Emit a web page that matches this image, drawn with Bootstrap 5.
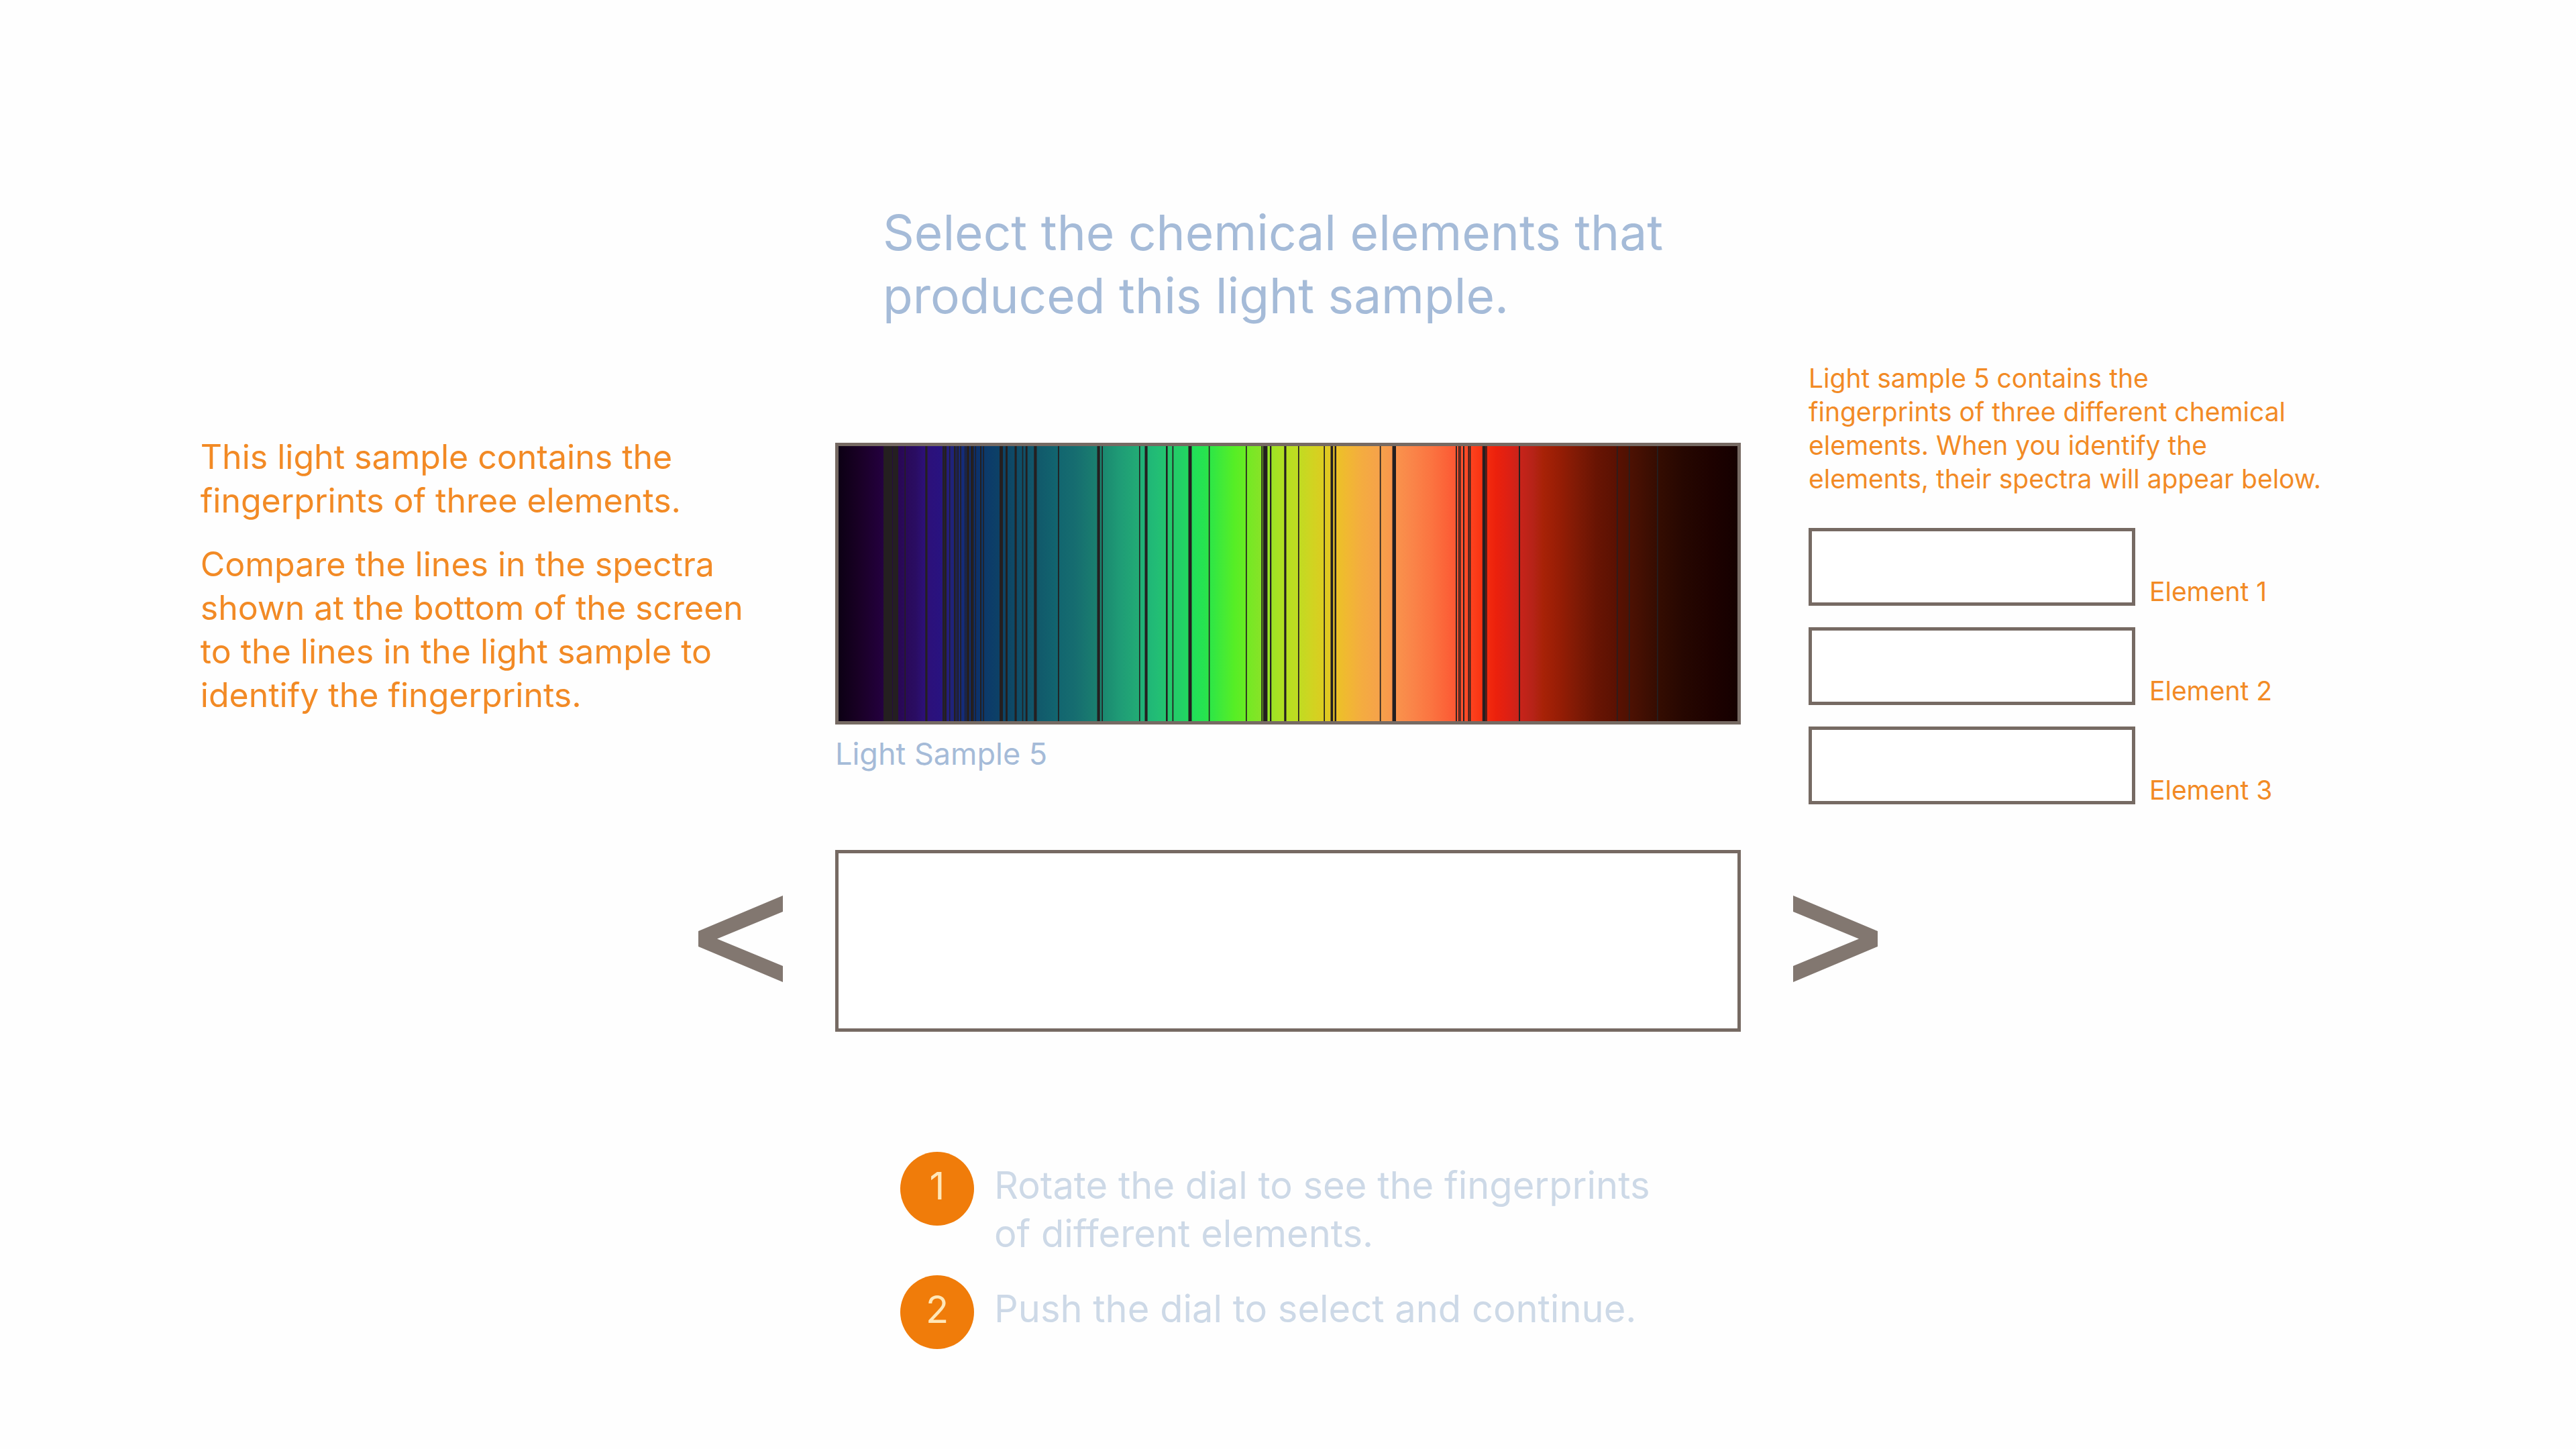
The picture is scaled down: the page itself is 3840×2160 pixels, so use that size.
<!DOCTYPE html>
<html lang="en">
<head>
<meta charset="utf-8">
<meta name="viewport" content="width=device-width, initial-scale=1">
<title>Light Sample 5</title>
<link href="https://cdn.jsdelivr.net/npm/bootstrap@5.3.0/dist/css/bootstrap.min.css" rel="stylesheet">
<style>
  body { background: #fefefe; font-family: Inter, "Liberation Sans", sans-serif; padding-top: 300px; }
  .center-col { flex: 0 1 1350px; min-width: 0; }
  .side-col { flex: 1 1 0; min-width: 0; }
  .blue { color: #a5bbd8; }
  .orange { color: #f28a25; }
  .heading { font-size: 73px; line-height: 94px; font-weight: 400; padding-left: 71px; margin-bottom: 51px; }
  .intro { font-size: 50px; line-height: 65px; padding-left: 24%; padding-top: 110px; }
  .intro p { margin-bottom: 30px; }
  .sample { padding-top: 121px; }
  .frame { border: 5px solid #766a63; }
  .spectrum { height: 420px; }
  .caption-text { font-size: 45px; line-height: 60px; padding-top: 14px; }
  .results { font-size: 39px; line-height: 50px; padding-left: 101px; }
  .results p { margin-bottom: 48px; }
  .found { gap: 32px; }
  .slot { width: 487px; height: 116px; }
  .slot-row { gap: 21px; line-height: 42px; }
  .picker { margin-top: 68px; }
  .preview { height: 271px; }
  .arrow-btn { color: #827770; margin: 0 78px; padding: 0 0 6px; border: 0; background: none; }
  .arrow-btn svg { width: 126px; height: 129px; }
  .steps { font-size: 56px; line-height: 72px; color: #cdd9e7; padding-left: 97px; margin-top: 179px; gap: 26px; }
  .steps li { gap: 30px; }
  .steps .step-text { padding-top: 14px; }
  .step-num { width: 110px; height: 110px; padding-bottom: 8px; background: #f07c0a; color: #ffe7b8; }
</style>
<script src="https://cdn.jsdelivr.net/npm/bootstrap@5.3.0/dist/js/bootstrap.bundle.min.js"></script>
</head>
<body>
<header class="d-flex justify-content-center">
  <div class="center-col">
    <h1 class="heading blue text-nowrap">Select the chemical elements that<br>produced this light sample.</h1>
  </div>
</header>

<main>
  <div class="d-flex justify-content-center align-items-start">
    <section class="side-col">
      <div class="intro orange text-nowrap">
        <p>This light sample contains the<br>fingerprints of three elements.</p>
        <p class="mb-0">Compare the lines in the spectra<br>shown at the bottom of the screen<br>to the lines in the light sample to<br>identify the fingerprints.</p>
      </div>
    </section>

    <figure class="center-col sample mb-0">
      <div class="frame spectrum">
        <svg id="spectrum" class="d-block w-100 h-100" viewBox="0 0 1340 410" preserveAspectRatio="none" role="img" aria-label="Absorption spectrum of light sample 5">
          <defs><linearGradient id="rainbow" gradientUnits="userSpaceOnUse" x1="0" y1="0" x2="1340" y2="0"></linearGradient></defs>
          <rect width="1340" height="410" fill="url(#rainbow)"/>
        </svg>
      </div>
      <figcaption class="caption-text blue">Light Sample 5</figcaption>
    </figure>

    <section class="side-col">
      <div class="results orange text-nowrap">
        <p>Light sample 5 contains the<br>fingerprints of three different chemical<br>elements. When you identify the<br>elements, their spectra will appear below.</p>
        <div class="found d-flex flex-column">
          <div class="slot-row d-flex align-items-end"><div class="slot frame bg-white"></div><span>Element 1</span></div>
          <div class="slot-row d-flex align-items-end"><div class="slot frame bg-white"></div><span>Element 2</span></div>
          <div class="slot-row d-flex align-items-end"><div class="slot frame bg-white"></div><span>Element 3</span></div>
        </div>
      </div>
    </section>
  </div>

  <div class="picker d-flex justify-content-center align-items-center">
    <div class="side-col d-flex justify-content-end">
      <button type="button" class="arrow-btn" aria-label="Previous element">
        <svg class="d-block" viewBox="0 0 126 129" fill="currentColor"><path d="M126 0V24L28 64.500L126 105V129L0 76V53Z"/></svg>
      </button>
    </div>
    <div class="center-col frame preview bg-white"></div>
    <div class="side-col d-flex">
      <button type="button" class="arrow-btn" aria-label="Next element">
        <svg class="d-block" viewBox="0 0 126 129" fill="currentColor"><path d="M0 0V24L98 64.500L0 105V129L126 76V53Z"/></svg>
      </button>
    </div>
  </div>

  <div class="d-flex justify-content-center">
    <ol class="center-col steps list-unstyled d-flex flex-column mb-0 text-nowrap">
      <li class="d-flex align-items-start">
        <span class="step-num rounded-circle d-flex align-items-center justify-content-center flex-shrink-0">1</span>
        <span class="step-text">Rotate the dial to see the fingerprints<br>of different elements.</span>
      </li>
      <li class="d-flex align-items-start">
        <span class="step-num rounded-circle d-flex align-items-center justify-content-center flex-shrink-0">2</span>
        <span class="step-text">Push the dial to select and continue.</span>
      </li>
    </ol>
  </div>
</main>

<script>
  // Continuous spectrum: position along the strip, colour
  const stops = [[0,'#0c0014'],[30,'#190025'],[60,'#22003a'],[89,'#290754'],[115,'#2a0d62'],[128,'#2d1078'],[150,'#29127f'],[165,'#22207a'],[185,'#142b78'],[205,'#0c306a'],[220,'#0c3a6a'],[250,'#0d4565'],[290,'#11566a'],[329,'#12666f'],[353,'#166d70'],[385,'#1a7f6f'],[396,'#1b8a70'],[420,'#1f9c76'],[447,'#22ab75'],[455,'#1fb378'],[475,'#22bd75'],[495,'#24c86b'],[515,'#22d264'],[528,'#22df59'],[545,'#26e350'],[555,'#2fe645'],[575,'#46eb34'],[590,'#56ee25'],[606,'#66ec24'],[610,'#74e924'],[630,'#87e327'],[645,'#9de325'],[667,'#b5df20'],[685,'#bfdc22'],[705,'#d0d421'],[723,'#dccc20'],[730,'#e0c822'],[743,'#ecc127'],[760,'#f1b733'],[780,'#f4ac40'],[806,'#f6a24a'],[831,'#f9934c'],[855,'#fa8549'],[885,'#fb7340'],[920,'#fc5833'],[930,'#fc502d'],[944,'#fe411d'],[958,'#f83413'],[968,'#f22a0e'],[980,'#ec210c'],[1000,'#dc2014'],[1013,'#ca231a'],[1035,'#b62318'],[1050,'#a82207'],[1075,'#961d05'],[1100,'#801a05'],[1130,'#681403'],[1160,'#5a1102'],[1180,'#4d1102'],[1205,'#3e0e02'],[1225,'#330c01'],[1260,'#260701'],[1300,'#1e0200'],[1340,'#150000']];
  // Absorption lines: left edge, right edge
  const lines = [[67,80.3],[81,89],[98.5,100],[129.3,132.5],[155,157.6],[158,161],[165,166.4],[172,174.4],[175.2,176],[177,179],[181.3,183],[188,189.3],[190.6,195],[197,201.5],[203.7,205],[211,213],[215.5,217],[240,245],[249,252],[262.5,265.6],[273.7,275.3],[278.8,281.6],[291.3,295.5],[327,328.8],[385.5,389.7],[392.3,394],[448,449.6],[456.5,460.6],[488,490.6],[497.5,499.3],[521.5,526.5],[551.8,553.4],[607,608.7],[630.3,632],[632.8,639.4],[643,645.3],[664.3,667.5],[685,686.7],[723.3,725],[733.5,737.2],[739.5,742],[806.8,808.5],[825.5,831],[920,921.8],[924,925.6],[926.2,927.6],[931,933],[938.5,940.3],[940.8,942.4],[959.8,964],[1014,1016],[1160,1161.5],[1178,1179.5],[1220,1221.7]];
  const ns = 'http://www.w3.org/2000/svg';
  const add = (parent, tag, attrs) => {
    const el = document.createElementNS(ns, tag);
    for (const k in attrs) el.setAttribute(k, attrs[k]);
    parent.appendChild(el);
  };
  const svg = document.getElementById('spectrum');
  const grad = document.getElementById('rainbow');
  stops.forEach(([x, c]) => add(grad, 'stop', { offset: x / 1340, 'stop-color': c }));
  lines.forEach(([a, b]) => add(svg, 'rect', { x: a, y: 0, width: b - a, height: 410, fill: '#241f20' }));
  add(svg, 'rect', { x: 964, y: 0, width: 3, height: 410, fill: '#5a1d18' });
</script>
</body>
</html>
